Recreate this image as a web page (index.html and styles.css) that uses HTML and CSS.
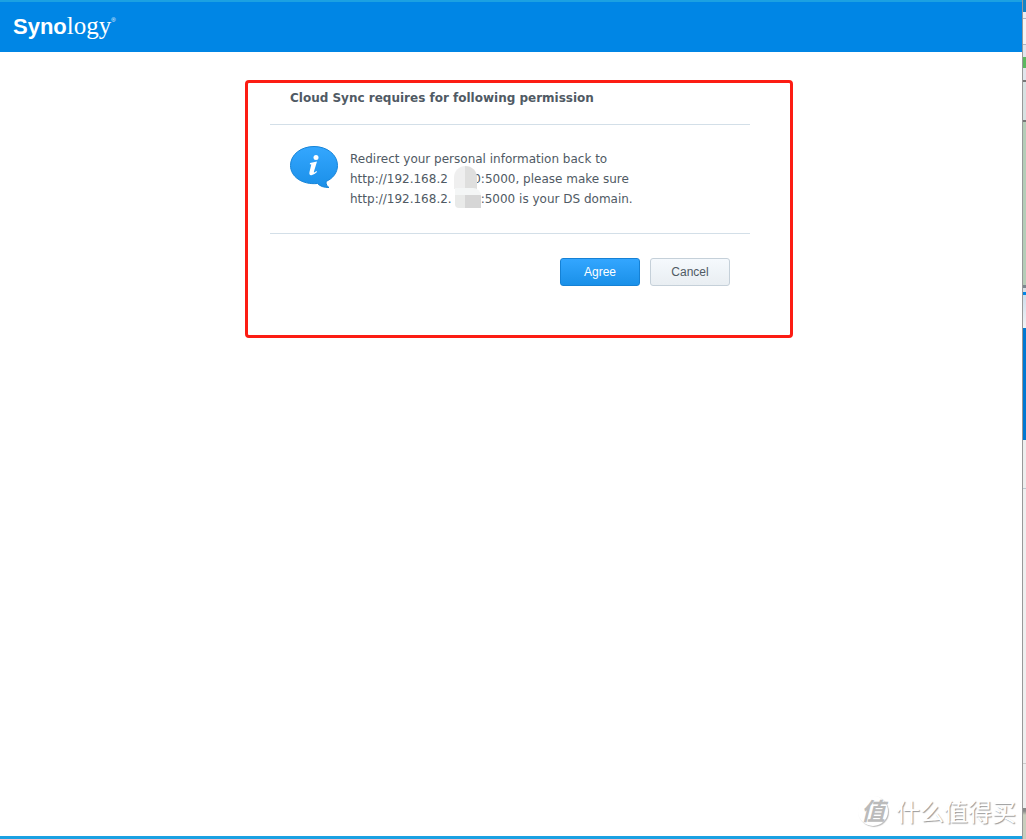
FILE: index.html
```
<!DOCTYPE html>
<html lang="en">
<head>
<meta charset="utf-8">
<title>Cloud Sync - Synology</title>
<link rel="stylesheet" href="styles.css">
</head>
<body>
<div class="window">
  <header class="header">
    <div class="logo" aria-label="Synology"><span class="logo-bold">Syno</span><span class="logo-serif">logy</span><span class="logo-mark">®</span></div>
  </header>
  <main class="content">
    <section class="highlight">
      <div class="dialog">
        <h1 class="title">Cloud Sync requires for following permission</h1>
        <div class="message">
          <svg class="info-icon" viewBox="0 0 48 43" width="48" height="43" aria-hidden="true">
            <defs>
              <linearGradient id="bubble" x1="0" y1="0" x2="0" y2="1">
                <stop offset="0" stop-color="#34a7ff"/>
                <stop offset="1" stop-color="#1a8fe8"/>
              </linearGradient>
            </defs>
            <path d="M24 .5C37 .5 47.500 8.500 47.500 19.500C47.500 26.500 43 32.500 36 35.500C36 38.500 37 40.500 39 41.500C34 41.500 30.500 40.500 27.500 37.500C12 39 .5 30.500 .5 19.500C.5 8.500 11 .5 24 .5Z" fill="url(#bubble)" stroke="#1684d8"/>
            <circle cx="26" cy="11.500" r="2.500" fill="#fff"/>
            <path d="M20 17L27 15.500L23.800 26Q23.800 27.300 26.500 25L27 26Q23.500 29.500 21 29.200Q18.800 29 19.500 26L21.300 18.500L19.800 18.300Z" fill="#fff"/>
          </svg>
          <p class="text">Redirect your personal information back to<br>http://192.168.2<span class="masked masked-wide">0<span class="mosaic mosaic-top"></span></span>:5000, please make sure<br>http://192.168.2.<span class="masked">0<span class="mosaic mosaic-bottom"></span></span>:5000 is your DS domain.</p>
        </div>
        <div class="actions">
          <button class="button button-primary" type="button">Agree</button>
          <button class="button" type="button">Cancel</button>
        </div>
      </div>
    </section>
  </main>
  <div class="watermark"><span class="seal">值</span><span>什么值得买</span></div>
</div>
<div class="backdrop"></div>
</body>
</html>
```
FILE: styles.css
```
* { box-sizing: border-box; }

body {
  margin: 0;
  min-height: 100vh;
  display: flex;
  background: #fff;
  color: #505a64;
  font: 12px/20px "DejaVu Sans", Verdana, sans-serif;
}

.window {
  flex: 1;
  display: flex;
  flex-direction: column;
  border-top: 2px solid #1ba1e2;
  border-bottom: 3px solid #1ba1e2;
}

.header {
  height: 50px;
  padding: 8px 13px;
  background: #0086e5;
  color: #fff;
}

.logo {
  display: flex;
  align-items: baseline;
}

.logo-bold { font: bold 22px/32px "Liberation Sans", Arial, sans-serif; }
.logo-serif { font: 25px/32px "Liberation Serif", serif; }
.logo-mark { align-self: flex-start; font: 6px/20px "Liberation Sans", sans-serif; }

.content {
  flex: 1;
  padding: 28px 0 0 16px;
}

.highlight {
  width: 548px;
  margin: 0 auto;
  padding: 5px 22px 49px;
  border: 3px solid #fc1c13;
  border-radius: 4px;
}

.dialog { width: 480px; }

.title {
  margin: 0;
  padding: 0 20px 16px;
  border-bottom: 1px solid #d3dfe8;
  font-size: 12px;
  line-height: 20px;
}

.message {
  display: flex;
  gap: 12px;
  padding: 21px 20px 24px;
  border-bottom: 1px solid #d3dfe8;
}

.info-icon { flex: none; }

.text {
  margin: 0;
  padding-top: 3px;
}

.masked {
  position: relative;
  display: inline-block;
  width: 29px;
  text-align: right;
}

.masked-wide { width: 33px; }

.mosaic {
  position: absolute;
  right: 0;
  height: 20px;
}

.mosaic-top {
  top: -3px;
  left: 6px;
  right: 4px;
  height: 23px;
  border-radius: 12px 12px 0 0;
  background: linear-gradient(90deg, #efefef 50%, #dfdfde 50%);
}

.mosaic-bottom {
  top: -1px;
  left: 3px;
  border-radius: 0 8px 0 4px;
  background: linear-gradient(#f4f6f6 35%, transparent 35%), linear-gradient(90deg, #e9eae9 40%, #d6d6d6 40%);
}

.actions {
  display: flex;
  justify-content: flex-end;
  gap: 10px;
  padding: 24px 20px 0;
}

.button {
  width: 80px;
  height: 28px;
  padding: 0;
  border: 1px solid #c5d0d9;
  border-radius: 3px;
  background: linear-gradient(#f5f9fd, #e9eef2);
  color: #505a64;
  font: 12px "Liberation Sans", Arial, sans-serif;
}

.button-primary {
  border-color: #1581d5;
  background: linear-gradient(#33a6ff, #1a90e8);
  color: #fff;
}

.watermark {
  display: flex;
  align-items: center;
  align-self: flex-end;
  gap: 8px;
  padding: 0 6px 9px 0;
  color: #fff;
  font: 24px/32px "Noto Sans CJK SC", sans-serif;
  text-shadow: 1px 1px 1px #999;
}

.seal {
  width: 30px;
  height: 30px;
  border-radius: 50%;
  box-shadow: 1px 1px 1px #bbb;
  color: #bbb;
  font-size: 24px;
  font-style: italic;
  font-weight: bold;
  line-height: 28px;
  text-align: center;
  text-shadow: none;
}

.backdrop {
  width: 4px;
  border-left: 1px solid #999;
  background: linear-gradient(#1583c4 12px, #e8edf2 12px 18px, #aab4c4 18px 19px, #f4f4f4 19px 44px, #aab4c4 44px 45px, #e1e5ec 45px 57px, #5cb860 57px 68px, #e1e5ec 68px 80px, #777 80px 82px, #d7e2e2 82px 120px, #777 120px 122px, #b5cdb8 122px 285px, #7c8790 285px 288px, #d8dfe5 288px 292px, #0086e5 292px 295px, #cfdeeb 295px, #f1f3f5 328px, #0078d2 328px 440px, #eee 440px 488px, #bcc6d0 488px 489px, #efefef 489px 763px, #ccc 763px 764px, #eee 764px 808px, #888 808px 811px, #c9cebd 815px);
}
```
